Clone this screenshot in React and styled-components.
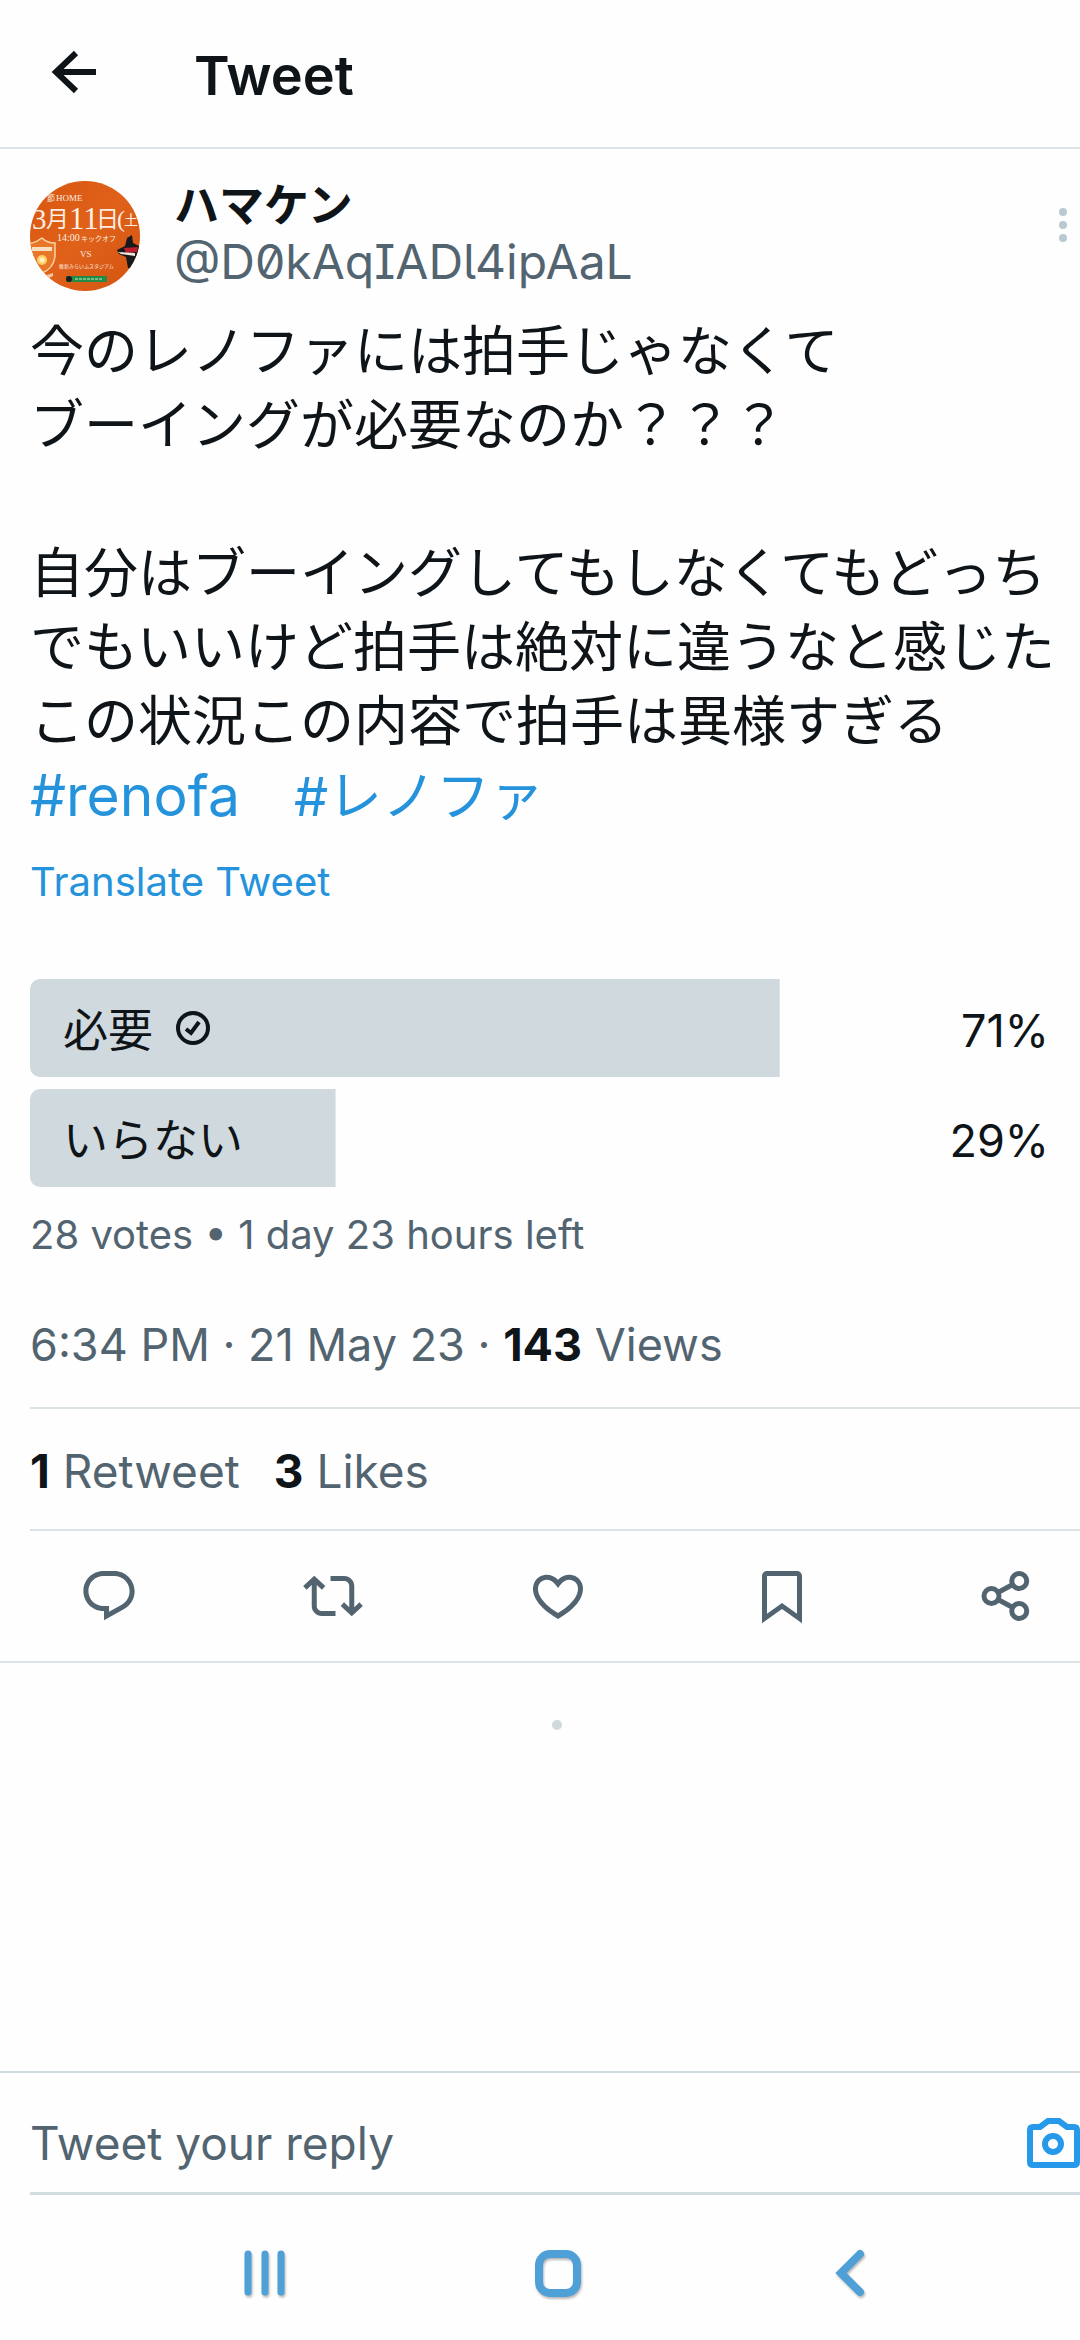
import React from "react";
import styled, { createGlobalStyle } from "styled-components";

const ink = "#0f1419";
const muted = "#536471";
const link = "#2493db";
const rule = "#dbe3e7";
const fontStack = '"Inter", "Noto Sans CJK JP", sans-serif';

const GlobalStyle = createGlobalStyle`
  * { box-sizing: border-box; }
  body { margin: 0; background: #fefefe; color: ${ink}; font-family: ${fontStack}; }
  button, input { font: inherit; color: inherit; background: none; border: 0; padding: 0; margin: 0; }
  button { display: flex; align-items: center; justify-content: center; cursor: pointer; }
  a { color: ${link}; text-decoration: none; }
  h1, p, ul { margin: 0; padding: 0; }
  svg { display: block; flex: none; }
`;

const Page = styled.div`
  min-height: 100vh;
  display: flex;
  flex-direction: column;
`;

const TopBar = styled.header`
  display: flex;
  align-items: center;
  gap: 90px;
  height: 149px;
  padding: 0 44px;
  border-bottom: 2px solid ${rule};
`;

const Title = styled.h1`
  padding-top: 4px;
  font-size: 54px;
  line-height: 64px;
  font-weight: 600;
`;

const Main = styled.main`
  flex: 1;
`;

const Inset = styled.div`
  padding-left: 30px;
`;

const Author = styled.div`
  display: flex;
  align-items: center;
  gap: 34px;
  padding: 29px 12px 0 0;
`;

const Names = styled.div`
  flex: 1;
  min-width: 0;
  display: flex;
  flex-direction: column;
  padding-bottom: 4px;
`;

const DisplayName = styled.span`
  font-size: 45px;
  line-height: 56px;
  font-weight: 700;
`;

const Handle = styled.span`
  font-size: 48px;
  line-height: 56px;
  color: ${muted};
  font-feature-settings: "zero", "cv05", "cv08";
`;

const MoreButton = styled.button`
  align-self: flex-start;
`;

const TweetText = styled.p`
  padding: 21px 16px 0 0;
  font-size: 54px;
  line-height: 74px;
  white-space: pre-wrap;
`;

const Hashtag = styled.a`
  font-size: ${(p) => (p.$latin ? 57 : 54)}px;
`;

const Translate = styled.a`
  display: block;
  padding: 20px 0 69px;
  font-size: 40px;
  line-height: 56px;
`;

const Poll = styled.ul`
  display: flex;
  flex-direction: column;
  gap: 12px;
  list-style: none;
`;

const Option = styled.li`
  display: grid;
  grid-template-columns: 1fr auto;
  align-items: center;
  height: 98px;
  padding: 6px 31px 0 33px;
  font-size: 45px;
  line-height: 56px;
  border-radius: 10px 0 0 10px;
  background: linear-gradient(#cfd9de, #cfd9de) no-repeat 0 0 / ${(p) => p.$fill}% 100%;
`;

const OptionLabel = styled.span`
  display: flex;
  align-items: center;
  gap: 22px;
`;

const VotedIcon = styled.svg`
  margin-bottom: 6px;
`;

const Votes = styled.p`
  padding-top: 20px;
  font-size: 40px;
  line-height: 56px;
  color: ${muted};
`;

const Meta = styled.p`
  padding: 54px 0 34px;
  font-size: 45px;
  line-height: 56px;
  color: ${muted};
  border-bottom: 2px solid ${rule};
`;

const Counts = styled.div`
  display: flex;
  gap: 34px;
  padding: 34px 0 30px;
  font-size: 46px;
  line-height: 56px;
  color: ${muted};
  border-bottom: 2px solid ${rule};
`;

const Strong = styled.strong`
  font-weight: 700;
  color: ${ink};
`;

const Actions = styled.div`
  display: flex;
  justify-content: space-between;
  padding: 35px 44px 35px 79px;
  color: ${muted};
  border-bottom: 2px solid ${rule};
`;

const ThreadEnd = styled.div`
  display: flex;
  justify-content: center;
  padding: 57px 0 0 34px;
`;

const Dot = styled.span`
  width: 10px;
  height: 10px;
  border-radius: 50%;
  background: #cfd9de;
`;

const Composer = styled.form`
  border-top: 2px solid #cfd9de;
  padding-left: 30px;
`;

const ComposerRow = styled.div`
  display: flex;
  align-items: center;
  height: 122px;
  padding-top: 20px;
  border-bottom: 3px solid #d3dce1;
`;

const ReplyInput = styled.input`
  flex: 1;
  min-width: 0;
  height: 66px;
  font-size: 46px;
  outline: none;
  &::placeholder { color: ${muted}; opacity: 1; }
`;

const NavBar = styled.nav`
  display: flex;
  justify-content: space-between;
  align-items: center;
  height: 145px;
  padding: 12px 204px 0 240px;
  color: #4fa0d6;
`;

const NavIcon = styled.svg`
  filter: drop-shadow(1px 2px 1px rgba(80, 80, 80, 0.4));
`;

const actions = [
  ["Reply", "M1.751 10c0-4.42 3.584-8 8.005-8h4.366c4.49 0 8.129 3.64 8.129 8.13 0 2.96-1.607 5.68-4.196 7.11l-8.054 4.46v-3.69h-.067c-4.49.1-8.183-3.51-8.183-8.01zm8.005-6c-3.317 0-6.005 2.69-6.005 6 0 3.37 2.77 6.08 6.138 6.01l.351-.01h1.761v2.3l5.087-2.81c1.951-1.08 3.163-3.13 3.163-5.36 0-3.39-2.744-6.13-6.129-6.13H9.756z"],
  ["Retweet", "M4.5 3.88l4.432 4.14-1.364 1.46L5.5 7.55V16c0 1.1.896 2 2 2H13v2H7.5c-2.209 0-4-1.79-4-4V7.55L1.432 9.48.068 8.02 4.5 3.88zM16.5 6H11V4h5.5c2.209 0 4 1.79 4 4v8.45l2.068-1.93 1.364 1.46-4.432 4.14-4.432-4.14 1.364-1.46 2.068 1.93V8c0-1.1-.896-2-2-2z"],
  ["Like", "M16.697 5.5c-1.222-.06-2.679.51-3.89 2.16l-.805 1.09-.806-1.09C9.984 6.01 8.526 5.44 7.304 5.5c-1.243.07-2.349.78-2.91 1.91-.552 1.12-.633 2.78.479 4.82 1.074 1.97 3.257 4.27 7.129 6.61 3.87-2.34 6.052-4.64 7.126-6.61 1.111-2.04 1.03-3.7.477-4.82-.561-1.13-1.666-1.84-2.908-1.91zm4.187 7.69c-1.351 2.48-4.001 5.12-8.379 7.67l-.503.3-.504-.3c-4.379-2.55-7.029-5.19-8.382-7.67-1.36-2.5-1.41-4.86-.514-6.67.887-1.79 2.647-2.91 4.601-3.01 1.651-.09 3.368.56 4.798 2.01 1.429-1.45 3.146-2.1 4.796-2.01 1.954.1 3.714 1.22 4.601 3.01.896 1.81.846 4.17-.514 6.67z"],
  ["Bookmark", "M4 4C4 2.9 4.9 2 6 2h12C19.1 2 20 2.9 20 4v18.94l-8-5.71-8 5.71V4zM6 4v15.06l6-4.29 6 4.29V4H6z"],
];

const Avatar = () => (
  <svg width="110" height="110" viewBox="0 0 110 110" role="img" aria-label="ハマケン">
    <defs>
      <clipPath id="avatar-clip"><circle cx="55" cy="55" r="55" /></clipPath>
      <linearGradient id="avatar-bg" x1="0" y1="0" x2="1" y2="1">
        <stop offset="0" stopColor="#d9570f" />
        <stop offset="0.5" stopColor="#e0611a" />
        <stop offset="1" stopColor="#d2540f" />
      </linearGradient>
    </defs>
    <g clipPath="url(#avatar-clip)">
      <rect width="110" height="110" fill="url(#avatar-bg)" />
      <g fill="#fbeee2" fontFamily='"Liberation Serif", "Noto Sans CJK JP", serif'>
        <text x="17" y="20" fontSize="8">節</text>
        <text x="26" y="20" fontSize="9">HOME</text>
        <g fontSize="31">
          <text x="2" y="48" fontSize="29">3</text>
          <text x="39" y="48">11</text>
          <text x="87" y="46" fontSize="24">(</text>
        </g>
        <g fontSize="23">
          <text x="16" y="46">月</text>
          <text x="66" y="46">日</text>
          <text x="94" y="44" fontSize="14">土</text>
        </g>
        <text x="27" y="60" fontSize="10">14:00</text>
        <text x="51" y="60" fontSize="7">キックオフ</text>
        <text x="50" y="76" fontSize="9">VS</text>
        <text x="29" y="87" fontSize="5">維新みらいふスタジアム</text>
      </g>
      <path d="M-1 63Q7 61 12 57Q17 62 25 62V76Q23 88 12 92Q2 87-1 78Z" fill="#e87728" stroke="#f8d2a8" strokeWidth="1.5" />
      <path d="M2 66H22V70H2Z" fill="#f7dfc0" />
      <circle cx="12" cy="79" r="5" fill="#ffd06a" />
      <circle cx="12" cy="79" r="2.5" fill="#fff3c4" />
      <path d="M87 69L95 65L97 57L102 54L103 62L109 65V80L105 89L98 87L96 76L89 73Z" fill="#17191d" />
      <path d="M94 67L108 66L107 71L96 72Z" fill="#bd1f2c" />
      <path d="M88 71L105 72L105 75L91 73Z" fill="#f3e6dc" />
      <path d="M13 95L23 92V95L17 98Z" fill="#f2c69c" />
      <rect x="36" y="95" width="41" height="6" fill="#248a45" />
      <circle cx="39" cy="98" r="3" fill="#1c1c1c" />
      <path d="M45 98H73" stroke="#8fd0a2" strokeWidth="1.5" strokeDasharray="3 1" />
    </g>
  </svg>
);

export default function App() {
  return (
    <>
      <GlobalStyle />
      <Page>
        <TopBar>
          <button type="button" aria-label="Back">
            <svg width="60" height="60" viewBox="0 0 60 60" fill="none" stroke={ink} strokeWidth="6">
              <path d="M52 28H12M32 9L12 28L32 47" strokeLinejoin="miter" />
            </svg>
          </button>
          <Title>Tweet</Title>
        </TopBar>

        <Main>
          <Inset>
            <Author>
              <Avatar />
              <Names>
                <DisplayName>ハマケン</DisplayName>
                <Handle>@D0kAqIADl4ipAaL</Handle>
              </Names>
              <MoreButton type="button" aria-label="More">
                <svg width="10" height="94" viewBox="0 0 10 94" fill="#b9c9d1">
                  <circle cx="5" cy="34" r="4" />
                  <circle cx="5" cy="47" r="4" />
                  <circle cx="5" cy="60" r="4" />
                </svg>
              </MoreButton>
            </Author>

            <TweetText lang="ja">
              {"今のレノファには拍手じゃなくて\nブーイングが必要なのか？？？\n\n自分はブーイングしてもしなくてもどっちでもいいけど拍手は絶対に違うなと感じた\nこの状況この内容で拍手は異様すぎる\n"}
              <Hashtag href="#renofa" $latin>#renofa</Hashtag>
              {"　"}
              <Hashtag href="#レノファ">#レノファ</Hashtag>
            </TweetText>
            <Translate href="#translate">Translate Tweet</Translate>

            <Poll>
              <Option $fill={71.4}>
                <OptionLabel lang="ja">
                  必要
                  <VotedIcon width="36" height="36" viewBox="0 0 36 36" fill="none" stroke={ink} strokeWidth="4" role="img" aria-label="Your vote">
                    <circle cx="18" cy="18" r="15" />
                    <path d="M11 19L16 23L24 12" />
                  </VotedIcon>
                </OptionLabel>
                <span>71%</span>
              </Option>
              <Option $fill={29.1}>
                <OptionLabel lang="ja">いらない</OptionLabel>
                <span>29%</span>
              </Option>
            </Poll>
            <Votes>28 votes • 1 day 23 hours left</Votes>

            <Meta>
              6:34 PM · 21 May 23 · <Strong>143</Strong> Views
            </Meta>
            <Counts>
              <span><Strong>1</Strong> Retweet</span>
              <span><Strong>3</Strong> Likes</span>
            </Counts>
          </Inset>

          <Actions>
            {actions.map(([name, d]) => (
              <button type="button" key={name} aria-label={name}>
                <svg width="60" height="60" viewBox="0 0 24 24" fill="currentColor"><path d={d} /></svg>
              </button>
            ))}
            <button type="button" aria-label="Share">
              <svg width="60" height="60" viewBox="0 0 24 24" fill="none" stroke="currentColor" strokeWidth="2">
                <circle cx="6.2" cy="12" r="3" />
                <circle cx="17.3" cy="6" r="3" />
                <circle cx="17.3" cy="18" r="3" />
                <path d="M8.8 10.6L14.7 7.4M8.8 13.4L14.7 16.6" />
              </svg>
            </button>
          </Actions>
          <ThreadEnd><Dot /></ThreadEnd>
        </Main>

        <Composer onSubmit={(e) => e.preventDefault()}>
          <ComposerRow>
            <ReplyInput type="text" aria-label="Tweet your reply" placeholder="Tweet your reply" />
            <button type="button" aria-label="Add photo">
              <svg width="53" height="50" viewBox="0 0 53 50" fill="none" stroke="#2799ea" strokeWidth="6">
                <path d="M6 9H13L21 3H32L40 9H47Q50 9 50 12V44Q50 47 47 47H6Q3 47 3 44V12Q3 9 6 9Z" />
                <circle cx="26" cy="26" r="8" />
              </svg>
            </button>
          </ComposerRow>
        </Composer>

        <NavBar>
          <button type="button" aria-label="Recent apps">
            <NavIcon width="50" height="50" viewBox="0 0 50 50" stroke="currentColor" strokeWidth="7" strokeLinecap="round">
              <path d="M8 5V43M25 5V43M41 5V43" />
            </NavIcon>
          </button>
          <button type="button" aria-label="Home">
            <NavIcon width="50" height="50" viewBox="0 0 50 50" fill="none" stroke="currentColor" strokeWidth="8">
              <rect x="6" y="5" width="38" height="39" rx="11" />
            </NavIcon>
          </button>
          <button type="button" aria-label="Back">
            <NavIcon width="50" height="50" viewBox="0 0 50 50" fill="none" stroke="currentColor" strokeWidth="8" strokeLinecap="round">
              <path d="M34 5L15 24L34 43" />
            </NavIcon>
          </button>
        </NavBar>
      </Page>
    </>
  );
}
